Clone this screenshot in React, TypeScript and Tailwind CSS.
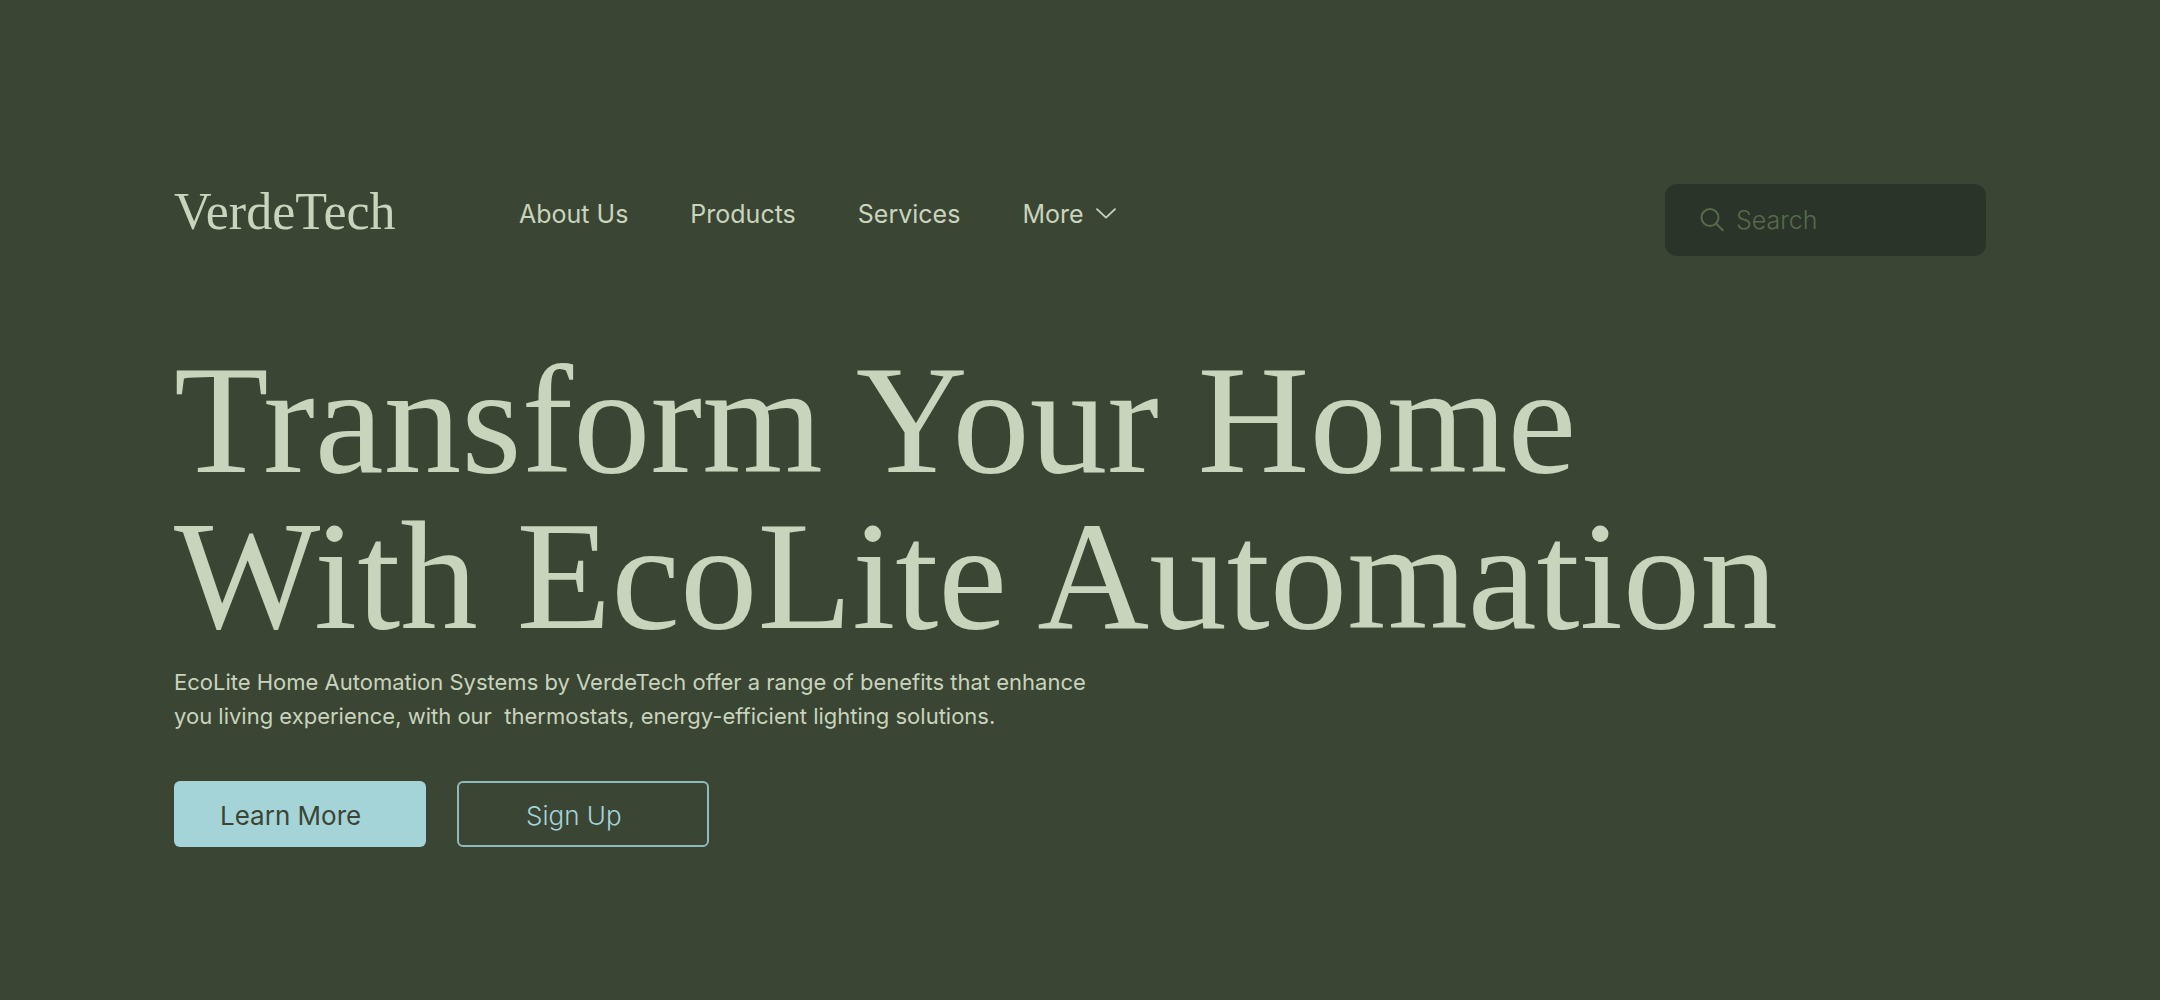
const links = ["About Us", "Products", "Services"];

function Logo() {
  return (
    <a
      href="#home"
      className="mt-1 w-[345px] shrink-0 font-['Liberation_Serif',serif] text-[52px] leading-[48px]"
    >
      VerdeTech
    </a>
  );
}

function MainNav() {
  return (
    <nav aria-label="Main" className="mt-3 flex items-center gap-[62px] text-[25px] leading-9">
      {links.map((label) => (
        <a key={label} href="#" className="whitespace-nowrap">
          {label}
        </a>
      ))}
      <button type="button" className="flex items-center gap-3">
        More
        <svg
          width="20"
          height="12"
          viewBox="0 0 20 12"
          fill="none"
          stroke="currentColor"
          strokeWidth="1.8"
          strokeLinecap="round"
          strokeLinejoin="round"
          aria-hidden="true"
        >
          <path d="M1 1.2 10 9.6l9-8.4" />
        </svg>
      </button>
    </nav>
  );
}

function SearchBox() {
  return (
    <label className="ml-auto flex h-[72px] w-[321px] items-center gap-3 rounded-xl bg-[#2b3429] pr-6 pl-[35px] text-[#556b4c]">
      <svg
        className="shrink-0"
        width="24"
        height="24"
        viewBox="0 0 24 24"
        fill="none"
        stroke="currentColor"
        strokeWidth="2"
        strokeLinecap="round"
        aria-hidden="true"
      >
        <circle cx="10" cy="9.5" r="8.5" />
        <path d="m16.2 15.8 6.6 6.4" />
      </svg>
      <input
        type="search"
        aria-label="Search"
        placeholder="Search"
        className="w-full min-w-0 bg-transparent pt-0.5 text-[25px] font-light outline-none placeholder:text-[#556b4c]"
      />
    </label>
  );
}

export default function App() {
  return (
    <div className="min-h-screen bg-[#3b4534] px-[174px] pt-[184px] pb-32 font-['Inter',sans-serif] text-[#c8d4bc]">
      <header className="flex items-start">
        <Logo />
        <MainNav />
        <SearchBox />
      </header>
      <main className="mt-[86px]">
        <h1 className="font-['Liberation_Serif',serif] text-[155px] leading-[156px]">
          Transform Your Home
          <br />
          With EcoLite Automation
        </h1>
        <p className="mt-[11px] text-[22px] leading-[34px]">
          EcoLite Home Automation Systems by VerdeTech offer a range of benefits that enhance
          <br />
          you living experience, with our&nbsp; thermostats, energy-efficient lighting solutions.
        </p>
        <div className="mt-12 flex gap-[31px] text-[26px]">
          <button
            type="button"
            className="h-[66px] w-[252px] rounded-md bg-[#a4d4d8] pt-0.5 pl-[46px] text-left text-[#3b4534]"
          >
            Learn More
          </button>
          <button
            type="button"
            className="h-[66px] w-[252px] rounded-md border-2 border-[#8fbabc] pt-0.5 pl-[67px] text-left font-light text-[#a4d4d8]"
          >
            Sign Up
          </button>
        </div>
      </main>
    </div>
  );
}
